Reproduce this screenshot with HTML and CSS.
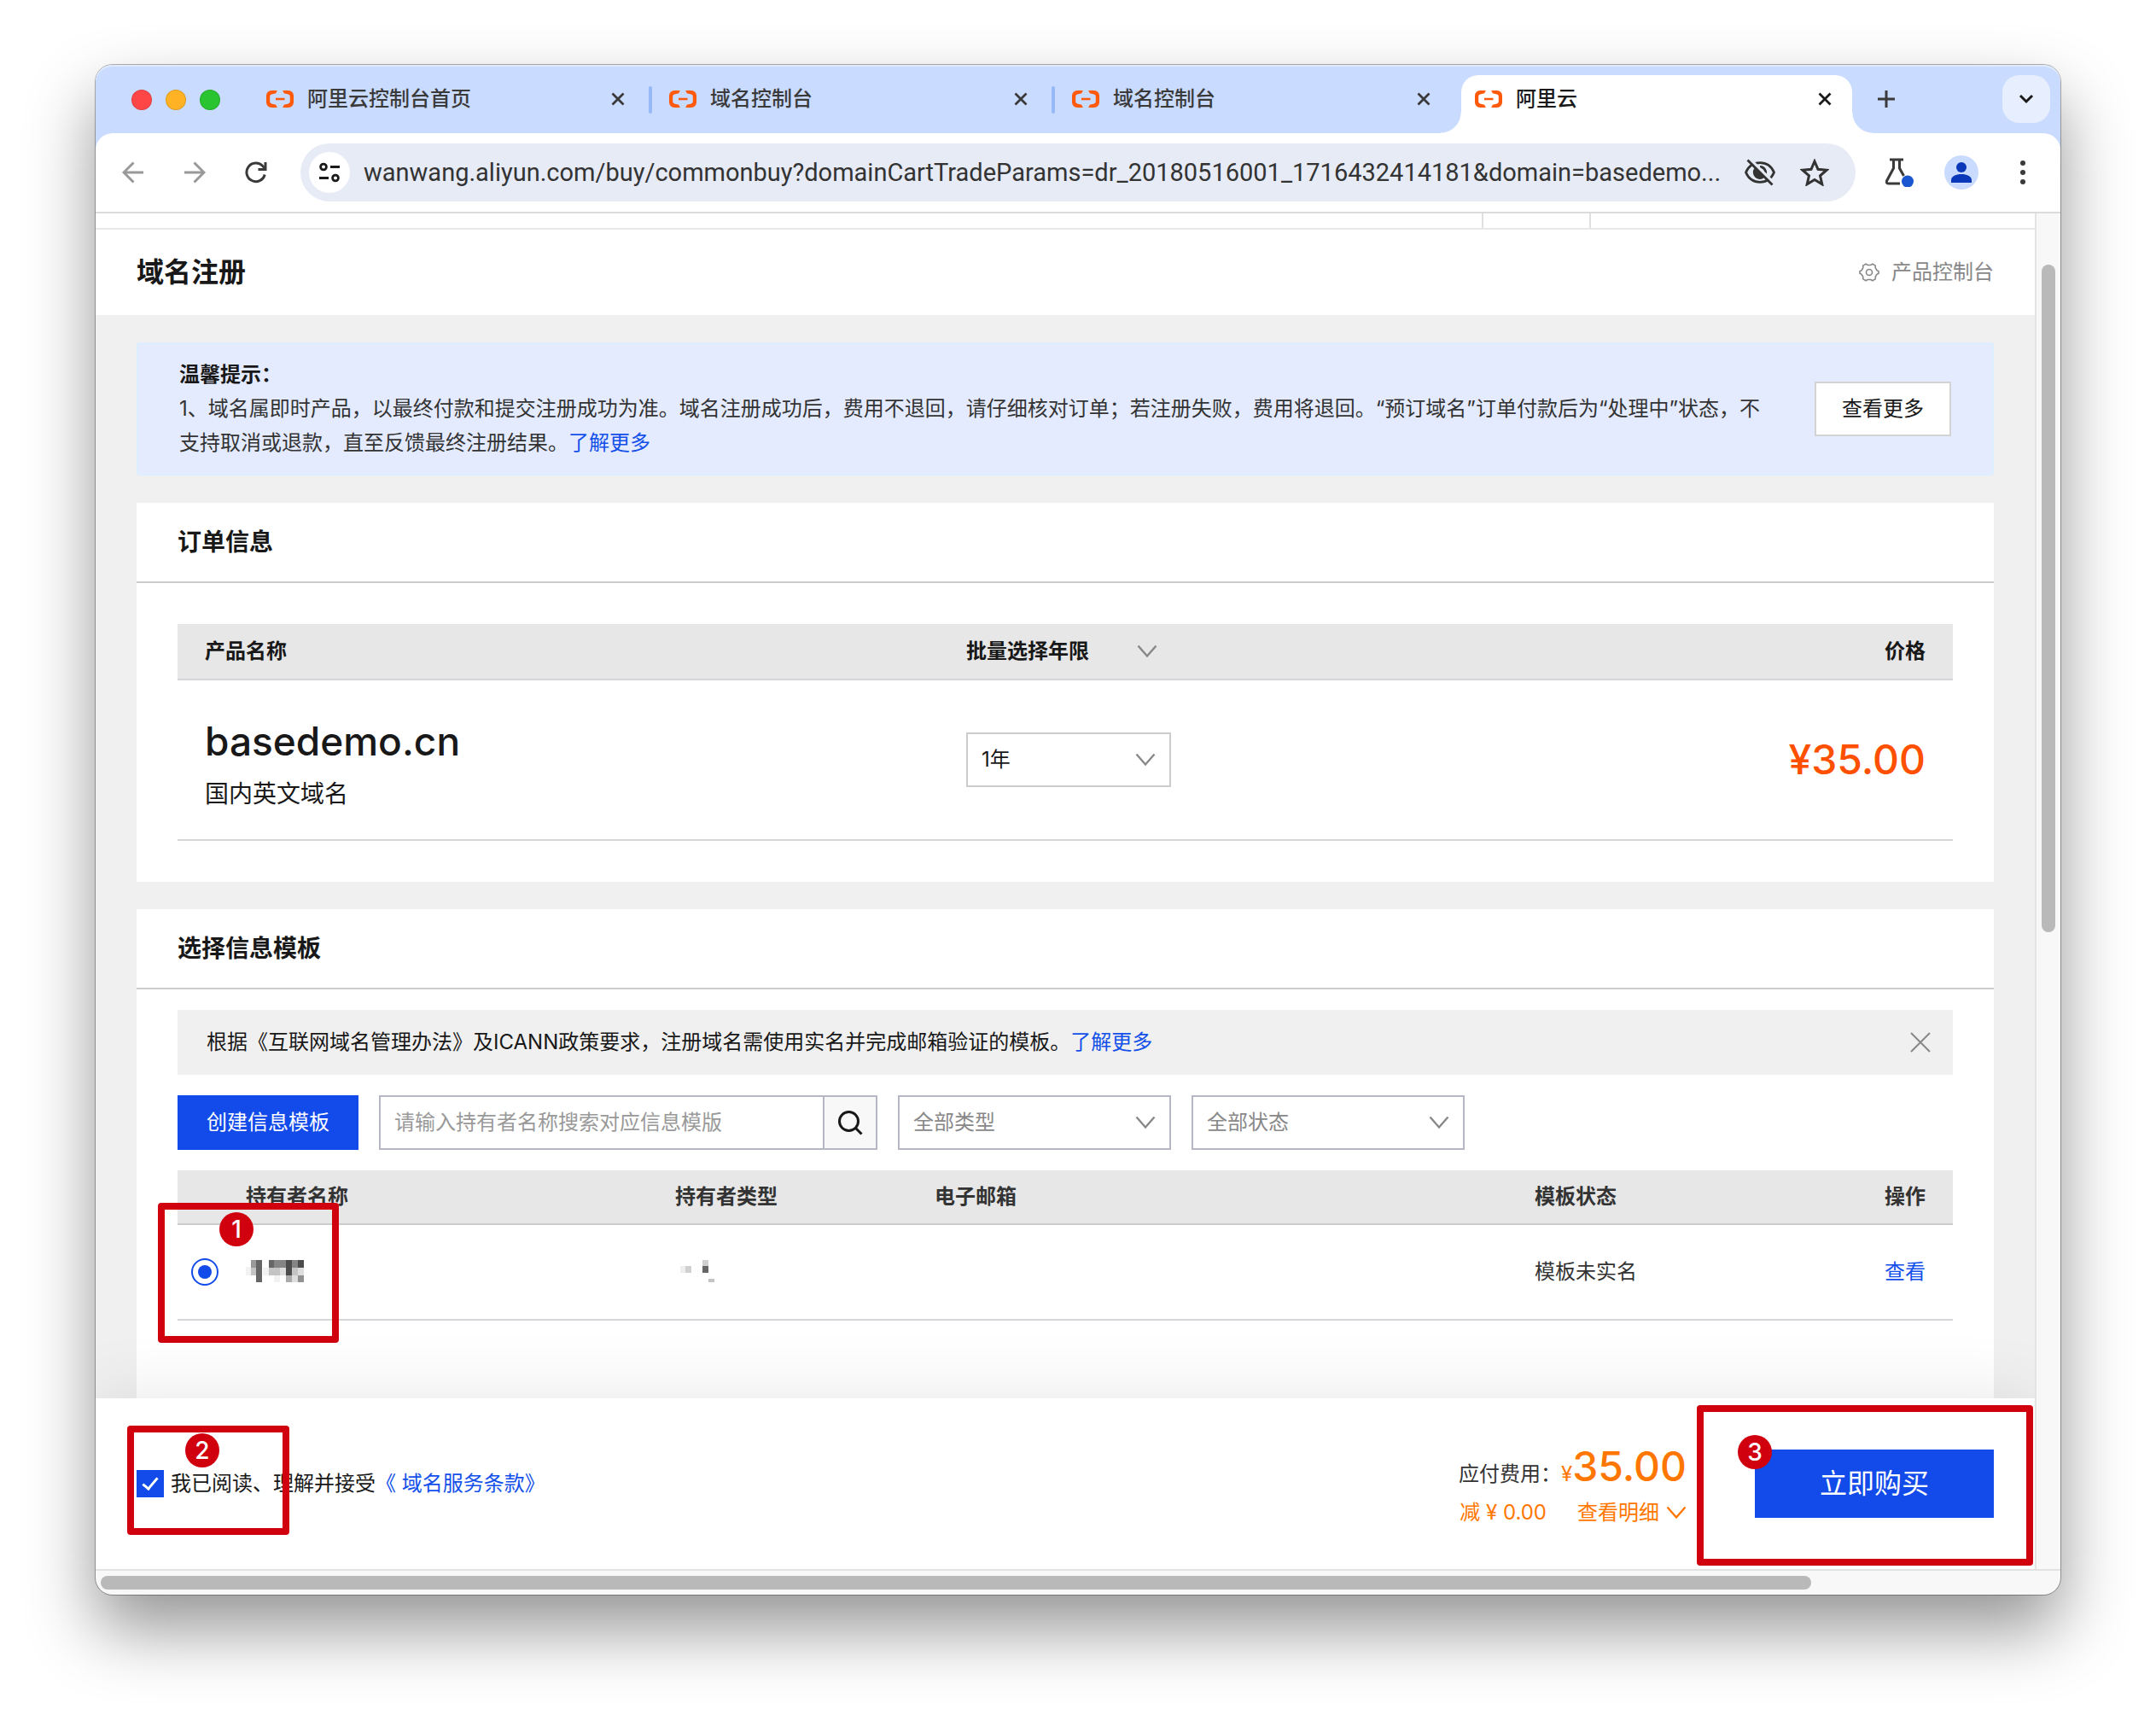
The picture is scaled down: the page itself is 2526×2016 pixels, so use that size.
FILE: index.html
```html
<!DOCTYPE html>
<html lang="zh-CN">
<head>
<meta charset="utf-8">
<title>阿里云</title>
<link rel="stylesheet" href="styles.css">
</head>
<body>
<svg class="defs" aria-hidden="true">
  <symbol id="i-aliyun" viewBox="0 0 32 20"><path fill="#ff5a0a" d="M12.8 0H6a6 6 0 0 0-6 6v8a6 6 0 0 0 6 6h6.800l-1.600-3.200-5-1.400A2.600 2.600 0 0 1 4.200 13V7a2.600 2.600 0 0 1 2-2.400l5-1.400zM19.200 0H26a6 6 0 0 1 6 6v8a6 6 0 0 1-6 6h-6.800l1.600-3.200 5-1.400a2.600 2.600 0 0 0 2-2.400V7a2.600 2.600 0 0 0-2-2.400l-5-1.400zM11 8.800h10.500v2.400H11z"/></symbol>
  <symbol id="i-x" viewBox="0 0 16 16"><path d="M1.500 1.500l13 13M14.500 1.500l-13 13" fill="none" stroke="currentColor" stroke-width="2.800"/></symbol>
  <symbol id="i-close" viewBox="0 0 24 24"><path d="M1 1l22 22M23 1L1 23" fill="none" stroke="currentColor" stroke-width="2"/></symbol>
  <symbol id="i-down" viewBox="0 0 24 16"><path d="M1.500 1.500L12 13.500 22.500 1.500" fill="none" stroke="currentColor" stroke-width="2.400"/></symbol>
</svg>
<div class="window">
  <header class="tabstrip">
    <div class="lights"><span class="light red"></span><span class="light amber"></span><span class="light green"></span></div>
    <div class="tab"><svg class="fav"><use href="#i-aliyun"/></svg><span class="tab-title">阿里云控制台首页</span><button class="tab-x" aria-label="关闭"><svg><use href="#i-x"/></svg></button></div>
    <div class="tab"><svg class="fav"><use href="#i-aliyun"/></svg><span class="tab-title">域名控制台</span><button class="tab-x" aria-label="关闭"><svg><use href="#i-x"/></svg></button></div>
    <div class="tab last"><svg class="fav"><use href="#i-aliyun"/></svg><span class="tab-title">域名控制台</span><button class="tab-x" aria-label="关闭"><svg><use href="#i-x"/></svg></button></div>
    <div class="tab active"><svg class="fav"><use href="#i-aliyun"/></svg><span class="tab-title">阿里云</span><button class="tab-x" aria-label="关闭"><svg><use href="#i-x"/></svg></button></div>
    <button class="new-tab" aria-label="新标签页"><svg width="20" height="20" viewBox="0 0 20 20"><path d="M10 0v20M0 10h20" stroke="currentColor" stroke-width="3"/></svg></button>
    <button class="tab-list" aria-label="标签页列表"><svg width="18" height="12" viewBox="0 0 18 12"><path d="M2 2l7 7 7-7" fill="none" stroke="currentColor" stroke-width="3"/></svg></button>
  </header>

  <div class="toolbar-wrap">
    <div class="toolbar">
      <button class="tool dim" aria-label="后退"><svg width="26" height="26" viewBox="0 0 26 26"><path d="M25 13H3M13.500 1.500L2 13l11.500 11.500" fill="none" stroke="currentColor" stroke-width="3"/></svg></button>
      <button class="tool dim" aria-label="前进"><svg width="26" height="26" viewBox="0 0 26 26"><path d="M1 13h22M12.500 1.500L24 13 12.500 24.500" fill="none" stroke="currentColor" stroke-width="3"/></svg></button>
      <button class="tool" aria-label="重新加载"><svg width="26" height="26" viewBox="0 0 26 26"><path d="M23.200 15.500A10.800 10.800 0 1 1 20.800 5.600L24 9" fill="none" stroke="currentColor" stroke-width="3"/><path d="M25.500 1v10h-10V8h7V1z" fill="currentColor"/></svg></button>
      <div class="omnibox">
        <button class="site" aria-label="网站信息"><svg width="26" height="24" viewBox="0 0 26 24" fill="none" stroke="currentColor" stroke-width="2.800"><circle cx="6" cy="5.500" r="3.400"/><path d="M14 5.500h11M1 18.500h11"/><circle cx="20" cy="18.500" r="3.400"/></svg></button>
        <input class="url" aria-label="地址" type="text" value="wanwang.aliyun.com/buy/commonbuy?domainCartTradeParams=dr_20180516001_1716432414181&amp;domain=basedemo...">
        <button class="omni-btn" aria-label="已阻止第三方 Cookie"><svg width="38" height="32" viewBox="0 0 38 32"><path d="M2.500 16C5.500 9 11.500 4.700 19 4.700S32.500 9 35.500 16C32.500 23 26.500 27.300 19 27.300S5.500 23 2.500 16z" fill="none" stroke="currentColor" stroke-width="2.800"/><path d="M12.500 11a8 8 0 0 0 11.500 11z" fill="currentColor"/><path d="M19 9.500a6.500 6.500 0 0 1 6.300 8.500" fill="none" stroke="currentColor" stroke-width="2.800"/><path d="M7.500 0.500L36 29" stroke="#e6ebf6" stroke-width="3.200"/><path d="M4.500 1.500L33.500 30.500" stroke="currentColor" stroke-width="2.800"/></svg></button>
        <button class="omni-btn" aria-label="收藏"><svg width="34" height="32" viewBox="0 0 34 32"><path d="M17 3l4 9.300 10.200.9-7.700 6.700 2.300 9.900L17 24.500l-8.800 5.300 2.300-9.900-7.700-6.700 10.200-.9z" fill="none" stroke="currentColor" stroke-width="3"/></svg></button>
      </div>
      <button class="tool" aria-label="实验"><svg width="34" height="34" viewBox="2 0 34 34"><path d="M7 2h16M11.500 2v10L3.500 27c-.8 1.600 0 3 1.800 3H19M18.500 2v10l5 9" fill="none" stroke="currentColor" stroke-width="3"/><circle cx="28" cy="27.500" r="7" fill="#1a56cf"/></svg></button>
      <button class="tool" aria-label="个人资料"><svg width="40" height="40" viewBox="0 0 40 40"><circle cx="20" cy="20" r="20" fill="#c9dbfe"/><circle cx="20" cy="14" r="6" fill="#0b38b8"/><path d="M8 32v-3c0-4.500 6-7 12-7s12 2.500 12 7v3z" fill="#0b38b8"/></svg></button>
      <button class="tool" aria-label="更多"><svg width="6" height="28" viewBox="0 0 6 28" fill="currentColor"><circle cx="3" cy="3" r="3"/><circle cx="3" cy="14" r="3"/><circle cx="3" cy="25" r="3"/></svg></button>
    </div>
  </div>

  <div class="viewport">
    <div class="page">
      <div class="topnav"><span class="topnav-cell"></span></div>
      <div class="page-head">
        <h1>域名注册</h1>
        <a class="console" href="#"><svg width="24" height="24" viewBox="0 0 24 24" fill="none" stroke="currentColor" stroke-width="1.600"><path d="M8 2.200l2.300 1.300h3.400L16 2.200l3.200 1.900.1 2.800 1.700 2.700 2 1.200v2.400l-2 1.200-1.700 2.700-.1 2.800-3.200 1.900-2.300-1.300h-3.400L8 21.800l-3.200-1.900-.1-2.800L3 14.400l-2-1.200v-2.400l2-1.200 1.700-2.700.1-2.800z"/><circle cx="12" cy="12" r="3.500"/></svg>产品控制台</a>
      </div>

      <main class="content">
        <section class="tip">
          <p class="tip-text"><strong>温馨提示：</strong>1、域名属即时产品，以最终付款和提交注册成功为准。域名注册成功后，费用不退回，请仔细核对订单；若注册失败，费用将退回。“预订域名”订单付款后为“处理中”状态，不支持取消或退款，直至反馈最终注册结果。<a href="#">了解更多</a></p>
          <button class="btn-plain">查看更多</button>
        </section>

        <section class="card">
          <h2>订单信息</h2>
          <div class="order-body">
            <table class="order">
              <colgroup><col class="c-product"><col class="c-year"><col></colgroup>
              <thead><tr><th class="pad-l">产品名称</th><th><button class="batch">批量选择年限<svg class="chev"><use href="#i-down"/></svg></button></th><th class="right">价格</th></tr></thead>
              <tbody><tr>
                <td class="pad-l"><div class="domain">basedemo.cn</div><div class="domain-kind">国内英文域名</div></td>
                <td><span class="select year"><select aria-label="年限"><option>1年</option></select><svg class="chev"><use href="#i-down"/></svg></span></td>
                <td class="right price">¥35.00</td>
              </tr></tbody>
            </table>
          </div>
        </section>

        <section class="card grow">
          <h2>选择信息模板</h2>
          <div class="tpl-body">
            <div class="policy"><p>根据《互联网域名管理办法》及ICANN政策要求，注册域名需使用实名并完成邮箱验证的模板。<a href="#">了解更多</a></p><button class="policy-x" aria-label="关闭"><svg><use href="#i-close"/></svg></button></div>
            <div class="filters">
              <button class="btn-primary">创建信息模板</button>
              <div class="search"><input type="text" aria-label="搜索信息模板" placeholder="请输入持有者名称搜索对应信息模版"><button aria-label="搜索"><svg width="30" height="30" viewBox="0 0 30 30" fill="none" stroke="currentColor" stroke-width="3"><circle cx="13.500" cy="13.500" r="11"/><path d="M21 21l7.500 7.500"/></svg></button></div>
              <span class="select muted"><select aria-label="类型"><option>全部类型</option></select><svg class="chev"><use href="#i-down"/></svg></span>
              <span class="select muted"><select aria-label="状态"><option>全部状态</option></select><svg class="chev"><use href="#i-down"/></svg></span>
            </div>
            <table class="tpl">
              <colgroup><col class="c-radio"><col class="c-name"><col class="c-type"><col class="c-mail"><col class="c-status"><col></colgroup>
              <thead><tr><th></th><th>持有者名称</th><th>持有者类型</th><th>电子邮箱</th><th>模板状态</th><th class="right">操作</th></tr></thead>
              <tbody><tr>
                <td><div class="pick"><input type="radio" name="tpl" aria-label="选择模板" checked><span class="mark mark-1"><b class="num">1</b></span></div></td>
                <td><svg class="mosaic" width="72" height="28" viewBox="0 0 72 28"><path fill="#f2f2f2" d="M0 8h6v10H0zM20 9h7v9h-7zM33 18h7v8h-7z"/><path fill="#999" d="M6 0h6v9H6z"/><path fill="#c4c4c4" d="M6 9h6v9H6zM27 9h13v9H27zM54 9h7v9h-7z"/><path fill="#666" d="M12 0h7v26h-7zM27 0h6v9h-6z"/><path fill="#858585" d="M33 0h14v9H33zM54 0h7v9h-7z"/><path fill="#4c4c4c" d="M47 0h7v18h-7zM61 0h7v9h-7z"/><path fill="#ddd" d="M40 9h7v9h-7zM61 9h7v9h-7zM54 18h7v8h-7z"/><path fill="#aaa" d="M47 18h7v8h-7z"/><path fill="#909090" d="M61 18h7v8h-7z"/></svg></td>
                <td><svg class="mosaic" width="72" height="28" viewBox="0 0 72 28"><path fill="#eee" d="M6 7h6v8H6z"/><path fill="#d0d0d0" d="M12 7h7v8h-7zM32 0h7v7h-7z"/><path fill="#666" d="M32 7h7v8h-7z"/><path fill="#c4c4c4" d="M39 22h7v4h-7z"/></svg></td>
                <td></td><td>模板未实名</td><td class="right"><a href="#">查看</a></td>
              </tr></tbody>
            </table>
          </div>
        </section>
      </main>

      <footer class="pay">
        <div class="agree">
          <label><input type="checkbox" checked>我已阅读、理解并接受</label><a href="#">《 域名服务条款》</a>
          <span class="mark mark-2"><b class="num">2</b></span>
        </div>
        <div class="sum">
          <div class="due"><span>应付费用：</span><span class="yen">¥</span><span class="amount">35.00</span></div>
          <div class="off"><span>减 ¥ 0.00</span><a class="detail" href="#">查看明细<svg class="chev"><use href="#i-down"/></svg></a></div>
        </div>
        <div class="buy"><button class="btn-primary big">立即购买</button><span class="mark mark-3"><b class="num">3</b></span></div>
      </footer>
    </div>
    <div class="vscroll"><span></span></div>
  </div>
  <div class="hscroll"><span></span></div>
</div>
</body>
</html>
```
FILE: styles.css
```css
* { box-sizing: border-box; }
body, h1, h2, p { margin: 0; }
body {
  display: flex;
  min-height: 100vh;
  padding: 76px 112px 148px;
  background: #fff;
  color: #181818;
  font: 24px/40px Inter, "Noto Sans CJK SC", sans-serif;
}
button, input, select { font: inherit; color: inherit; margin: 0; padding: 0; border: 0; background: none; border-radius: 0; }
button { display: flex; align-items: center; justify-content: center; }
input, select { appearance: none; outline: 0; min-width: 0; }
a { color: #1350ea; text-decoration: none; }
svg { flex: none; display: block; }
.defs { position: absolute; width: 0; height: 0; }

.window {
  flex: 1;
  min-width: 0;
  display: flex;
  flex-direction: column;
  border-radius: 20px;
  background: #f8f8f8;
  box-shadow: 0 0 0 1px rgba(0, 0, 0, .3), 0 40px 80px rgba(0, 0, 0, .42);
}

/* tab strip */
.tabstrip {
  display: flex;
  align-items: flex-end;
  height: 80px;
  border-radius: 20px 20px 0 0;
  background: #c9dbfe;
  box-shadow: inset 0 2px #e0eafe;
}
.lights { display: flex; gap: 16px; padding: 0 38px 27px 42px; }
.light { width: 24px; height: 24px; border-radius: 50%; border: 1px solid rgba(0, 0, 0, .12); }
.red { background: #ff4647; }
.amber { background: #ffb224; }
.green { background: #29c430; }
.tab {
  position: relative;
  flex: 0 1 458px;
  display: flex;
  align-items: center;
  height: 68px;
  margin-right: 14px;
  padding: 0 22px 12px 16px;
  color: #3a3a3a;
  font-weight: 500;
}
.tab::after { content: ""; position: absolute; right: -10px; top: 13px; width: 4px; height: 32px; border-radius: 2px; background: #97b9f7; }
.last::after { display: none; }
.fav { width: 32px; height: 20px; margin-right: 16px; }
.tab-title { flex: 1; white-space: nowrap; }
.tab-x svg { width: 16px; height: 16px; }
.tab.active { padding-right: 24px; border-radius: 20px 20px 0 0; background: #fff; color: #1a1a1a; }
.tab.active::before, .tab.active::after {
  content: ""; position: absolute; top: auto; bottom: 0; width: 24px; height: 24px; border-radius: 0;
}
.tab.active::before { left: -24px; background: radial-gradient(circle at 0 0, transparent 23px, #fff 24px); }
.tab.active::after { right: -24px; background: radial-gradient(circle at 100% 0, transparent 23px, #fff 24px); }
.new-tab { width: 52px; height: 56px; margin-bottom: 12px; color: #3a3a3a; }
.tab-list { width: 56px; height: 56px; margin: 0 12px 12px auto; border-radius: 20px; background: #e7eefe; color: #1a1a1a; }

/* toolbar */
.toolbar-wrap { background: #c9dbfe; border-bottom: 2px solid #dadbdd; }
.toolbar { display: flex; align-items: center; padding: 12px 8px; border-radius: 20px 20px 0 0; background: #fff; }
.tool { width: 72px; height: 68px; color: #3a3a3a; }
.dim { color: #999; }
.omnibox { flex: 1; min-width: 0; display: flex; align-items: center; height: 68px; margin: 0 16px; padding: 0 16px 0 10px; border-radius: 34px; background: #e6ebf6; color: #333; }
.site { width: 48px; height: 48px; margin-right: 16px; border-radius: 50%; background: #fff; color: #1a1a1a; }
.url { flex: 1; font-family: Roboto, sans-serif; font-size: 29px; }
.omni-btn { width: 64px; height: 48px; }

/* viewport */
.viewport { flex: 1; display: flex; min-height: 0; }
.page { flex: 1; min-width: 0; display: flex; flex-direction: column; overflow: hidden; background: #f0f0f0; }
.vscroll { width: 30px; padding: 60px 0 0 6px; border-left: 2px solid #e4e4e4; }
.vscroll span { display: block; width: 16px; height: 782px; border-radius: 8px; background: #b9b9b9; }
.hscroll { height: 30px; padding: 6px 0 0 6px; border-top: 2px solid #e2e2e2; }
.hscroll span { display: block; width: 2004px; max-width: 100%; height: 16px; border-radius: 8px; background: #b9b9b9; }

.topnav { display: flex; justify-content: flex-end; height: 19px; padding-right: 520px; border-bottom: 2px solid #e8e8e8; background: #fff; }
.topnav-cell { width: 128px; border: solid #e0e0e0; border-width: 0 2px; }
.page-head { display: flex; align-items: center; justify-content: space-between; height: 100px; padding: 0 48px; background: #fff; }
h1 { font-size: 32px; font-weight: 700; }
.console { display: flex; align-items: center; gap: 14px; color: #888; }

.content { flex: 1; display: flex; flex-direction: column; gap: 32px; padding: 32px 48px 0; }
.tip { display: flex; align-items: center; gap: 44px; padding: 16px 48px; border: 2px solid #dceeff; border-radius: 4px; background: #e4ebff; }
.tip-text { flex: 1; color: #333; }
.tip-text strong { display: block; font-weight: 700; color: #181818; }
.btn-plain { width: 160px; height: 64px; border: 2px solid #d3d3d3; background: #fff; }

.card { background: #fff; }
.grow { flex: 1; }
h2 { padding: 26px 48px; border-bottom: 2px solid #ccc; font-size: 28px; line-height: 40px; font-weight: 700; }
table { width: 100%; border-collapse: separate; border-spacing: 0; table-layout: fixed; }
th { padding: 0; background: #e7e7e7; text-align: left; font-weight: 700; }
td { padding: 0; border-bottom: 2px solid #d5d5da; }
.order-body { padding: 48px; }
.order th { height: 66px; border-bottom: 2px solid #d5d5da; }
.order td { height: 188px; }
.c-product { width: 924px; }
.c-year { width: 500px; }
th.pad-l, td.pad-l { padding-left: 32px; }
th.right, td.right { padding-right: 32px; text-align: right; }
.batch { gap: 56px; font-weight: 700; }
.chev { width: 24px; height: 16px; color: #888; }
.domain { padding-top: 8px; font-size: 46px; line-height: 60px; font-weight: 500; }
.domain-kind { margin-top: 12px; font-size: 28px; }
.select { display: inline-grid; align-items: center; width: 320px; height: 64px; border: 2px solid #b5b8c4; background: #fff; vertical-align: middle; }
.select > * { grid-area: 1 / 1; }
.select select { width: 100%; height: 60px; padding-left: 16px; }
.select .chev { justify-self: end; margin-right: 16px; pointer-events: none; }
.select.year { width: 240px; border-color: #ccc; }
.muted { color: #888; }
.order .price { color: #ff5000; font-size: 48px; font-weight: 500; }

.tpl-body { padding: 24px 48px 0; }
.policy { display: flex; align-items: center; justify-content: space-between; padding: 18px 26px 18px 34px; background: #f0f0f0; }
.policy-x { color: #888; }
.policy-x svg { width: 24px; height: 24px; }
.filters { display: flex; gap: 24px; margin: 24px 0; }
.btn-primary { width: 212px; height: 64px; background: #134bea; color: #fff; }
.search { display: flex; flex: 0 1 584px; height: 64px; border: 2px solid #b5b8c4; }
.search input { flex: 1; padding-left: 16px; }
.search input::placeholder { color: #999; opacity: 1; }
.search button { width: 62px; border-left: 2px solid #b5b8c4; background: #f8f8f8; }
.tpl { color: #333; }
.tpl th { height: 64px; border-bottom: 2px solid #ccc; }
.tpl td { height: 112px; }
.c-radio { width: 80px; }
.c-name { width: 503px; }
.c-type { width: 304px; }
.c-mail { width: 703px; }
.c-status { width: 300px; }
.pick { position: relative; width: 32px; height: 32px; margin-left: 16px; }
input[type="radio"] { display: grid; place-content: center; width: 32px; height: 32px; border: 2px solid #134bea; border-radius: 50%; }
input[type="radio"]::before { content: ""; width: 16px; height: 16px; border-radius: 50%; background: #134bea; }

/* pay bar */
.pay { position: relative; display: flex; align-items: center; height: 200px; padding: 0 48px; background: #fff; box-shadow: 0 0 84px rgba(0, 0, 0, .1); }
.agree { position: relative; display: flex; align-items: center; margin-right: auto; }
.agree label { display: flex; align-items: center; gap: 8px; }
input[type="checkbox"] { display: grid; place-content: center; width: 32px; height: 32px; padding-bottom: 4px; background: #134bea; }
input[type="checkbox"]::before { content: ""; width: 15px; height: 7px; border: solid #fff; border-width: 0 0 3px 3px; transform: rotate(-50deg); }
.sum { padding-top: 8px; margin-right: 80px; color: #ff7700; }
.due { display: flex; align-items: baseline; justify-content: flex-end; line-height: 50px; }
.due span:first-child { color: #333; }
.amount { font-size: 48px; font-weight: 500; }
.off { display: flex; gap: 36px; justify-content: flex-end; }
.detail { display: flex; align-items: center; gap: 8px; color: inherit; }
.detail .chev { color: inherit; }
.buy { position: relative; }
.big { width: 280px; height: 80px; font-size: 32px; }

/* numbered highlights */
.mark { position: absolute; border: 8px solid #d0000f; border-radius: 4px; pointer-events: none; }
.num { position: absolute; width: 40px; height: 40px; border-radius: 50%; background: #d0000f; color: #fff; font-size: 28px; font-weight: 500; text-align: center; }
.mark-1 { left: -39px; top: -65px; width: 212px; height: 164px; }
.mark-1 .num { left: 64px; top: 3px; }
.mark-2 { left: -11px; top: -48px; width: 190px; height: 128px; }
.mark-2 .num { left: 60px; top: 1px; }
.mark-3 { left: -68px; top: -52px; width: 394px; height: 188px; }
.mark-3 .num { left: 40px; top: 27px; }
```
